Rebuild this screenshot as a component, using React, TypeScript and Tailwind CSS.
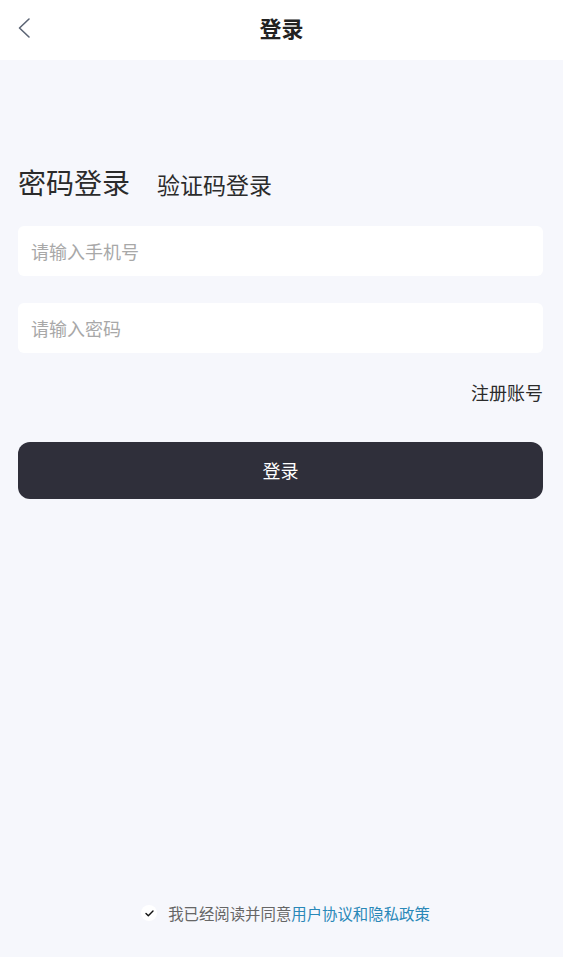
import React, { useState } from 'react';

const font = { fontFamily: '"Noto Sans CJK SC", "Noto Sans", sans-serif' };

export default function App() {
  const [agreed, setAgreed] = useState(true);
  const [tab, setTab] = useState<'password' | 'code'>('password');

  return (
    <div className="flex flex-col h-[957px] w-full bg-[#f6f7fc]" style={font}>
      {/* Header */}
      <header className="relative h-[60px] bg-white flex justify-center shrink-0">
        <button className="absolute left-[14px] top-[14px] p-[2px]">
          <svg width="16" height="24" viewBox="0 0 16 24" fill="none">
            <path d="M13 3 L3.5 12 L13 21" stroke="#5b6474" strokeWidth="1.6" strokeLinecap="round" strokeLinejoin="round" />
          </svg>
        </button>
        <h1 className="text-[22px] font-bold text-[#222] leading-[22px] mt-[16px]">登录</h1>
      </header>

      <div className="flex-1 flex flex-col pl-[18px] pr-[20px]">
        {/* Tabs */}
        <div className="flex items-end gap-[27px] mt-[102px]">
          <button
            onClick={() => setTab('password')}
            className={tab === 'password' ? 'text-[28px] leading-[40px] text-[#2b2b2b]' : 'text-[23px] leading-[36px] text-[#2b2b2b]'}>
            密码登录
          </button>
          <button
            onClick={() => setTab('code')}
            className={tab === 'code' ? 'text-[28px] leading-[40px] text-[#2b2b2b]' : 'text-[23px] leading-[36px] text-[#2b2b2b]'}>
            验证码登录
          </button>
        </div>

        {/* Inputs */}
        <input
          className="mt-[24px] h-[50px] w-full rounded-[6px] bg-white px-[13px] text-[18px] text-[#333] placeholder:text-[#a8a8a8] outline-none"
          placeholder="请输入手机号"
          autoFocus />
        <input
          type="password"
          className="mt-[27px] h-[50px] w-full rounded-[6px] bg-white px-[13px] text-[18px] text-[#333] placeholder:text-[#a8a8a8] outline-none"
          placeholder="请输入密码" />

        <div className="flex justify-end mt-[26px]">
          <button className="text-[18px] leading-[26px] text-[#2b2b2b]">注册账号</button>
        </div>

        <button className="mt-[37px] h-[57px] w-full rounded-[12px] bg-[#2f2f3a] text-white text-[18px]">
          登录
        </button>

        <div className="flex-1" />

        {/* Agreement */}
        <div className="flex items-center justify-center gap-[11px] mb-[33px] pl-[10px]">
          <button
            onClick={() => setAgreed(!agreed)}
            className="w-[16px] h-[16px] rounded-full bg-white flex items-center justify-center">
            {agreed &&
            <svg width="9" height="7" viewBox="0 0 9 7" fill="none">
                <path d="M1 3.6 L3.3 5.8 L8 1" stroke="#111" strokeWidth="1.4" strokeLinecap="round" strokeLinejoin="round" />
              </svg>
            }
          </button>
          <p className="text-[15.4px] leading-[22px] text-[#666]">
            我已经阅读并同意<span className="text-[#2a88b8]">用户协议和隐私政策</span>
          </p>
        </div>
      </div>
    </div>);

}
